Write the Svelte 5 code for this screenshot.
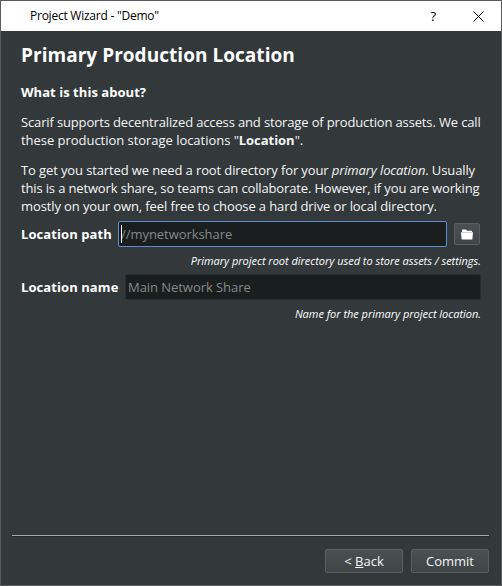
<script>
  let path = $state('');
  let name = $state('');
</script>

<div class="window">
  <header>
    <span class="caption">Project Wizard - "Demo"</span>
    <span class="help">?</span>
    <svg class="close" width="11" height="11" viewBox="0 0 11 11"><path d="M.5 .5l10 10M10.5 .5l-10 10" fill="none" stroke="#000" stroke-width="1" /></svg>
  </header>
  <main>
    <h1>Primary Production Location</h1>
    <h2>What is this about?</h2>
    <p>
      <span class="wide">Scarif supports decentralized access and storage of production assets. We call</span><br />
      <span class="loose">these production storage locations "<b>Location</b>".</span>
    </p>
    <p>
      <span class="mid">To get you started we need a root directory for your <i>primary location</i>. Usually</span><br />
      <span class="wide">this is a network share, so teams can collaborate. However, if you are working</span><br />
      <span class="mid">mostly on your own, feel free to choose a hard drive or local directory.</span>
    </p>
    <div class="row first">
      <label for="path">Location path</label>
      <div class="field focus"><input id="path" placeholder="//mynetworkshare" bind:value={path} /><span class="cursor"></span></div>
      <button class="browse" aria-label="Browse">
        <svg width="12" height="11" viewBox="0 0 12 11"><path d="M1 3V1.2Q1 .5 1.7 .5H5L6.2 1.7H10.5Q11 1.7 11 2.3V3z M0 3.3H12L11.4 10Q11.4 10.5 10.8 10.5H1.2Q.6 10.5 .6 10z" fill="#fff" /></svg>
      </button>
    </div>
    <div class="hint">Primary project root directory used to store assets / settings.</div>
    <div class="row second">
      <label for="name">Location name</label>
      <div class="field"><input id="name" placeholder="Main Network Share" bind:value={name} /></div>
    </div>
    <div class="hint">Name for the primary project location.</div>
  </main>
  <footer>
    <button>&lt;&nbsp;<u>B</u>ack</button>
    <button>Commit</button>
  </footer>
</div>

<style>
  .window {
    box-sizing: border-box;
    width: 502px;
    height: 586px;
    border: 1px solid #5b5b5d;
    background: #33383b;
    color: #f4f5f5;
    font: 13px/18px "Open Sans", "Noto Sans", sans-serif;
    display: flex;
    flex-direction: column;
    overflow: hidden;
  }
  header {
    height: 30px;
    flex: none;
    display: flex;
    align-items: center;
    background: #fff;
    color: #000;
    padding: 0 17px 0 29px;
    font-size: 12px;
  }
  .caption { flex: 1; white-space: nowrap; letter-spacing: -0.24px; }
  .help { margin-right: 37px; font-size: 13px; }
  .close { display: block; }
  main { flex: 1; padding: 0 20px; }
  h1 { margin: 11px 0 0; font-size: 19px; line-height: 26px; font-weight: 700; letter-spacing: 0.04px; white-space: nowrap; color: #fff; }
  h2 { margin: 15px 0 0; font-size: 13px; line-height: 18px; font-weight: 700; letter-spacing: 0.04px; color: #fff; }
  p { margin: 12px 0 0; white-space: nowrap; }
  .wide { letter-spacing: -0.145px; }
  .mid { letter-spacing: -0.115px; }
  .loose { letter-spacing: -0.035px; }
  .row { display: flex; align-items: center; height: 26px; }
  .first { margin-top: 6px; }
  .second { margin-top: 1px; }
  label { font-weight: 700; white-space: nowrap; color: #fff; flex: none; letter-spacing: 0.08px; }
  .first label { width: 97px; }
  .second label { width: 104px; }
  .field {
    box-sizing: border-box;
    flex: 1;
    height: 26px;
    position: relative;
    display: flex;
    border: 1px solid #282d2f;
    border-radius: 2px;
    background: #1a1e1f;
  }
  .focus { border-color: #5c8fd0; }
  input {
    flex: 1;
    min-width: 0;
    border: 0;
    outline: 0;
    padding: 0 2px;
    background: none;
    color: #f4f5f5;
    font: inherit;
    letter-spacing: -0.05px;
  }
  input::placeholder { color: #858989; opacity: 1; }
  .cursor { position: absolute; left: 2px; top: 3px; width: 1px; height: 18px; background: #fff; }
  button {
    box-sizing: border-box;
    border: 1px solid #5a6062;
    border-radius: 2px;
    background: linear-gradient(#4b5053, #404548);
    color: #f4f5f5;
    font: inherit;
    padding: 0;
  }
  .browse { width: 26px; height: 22px; margin: 0 1px 0 7px; display: flex; align-items: center; justify-content: center; flex: none; }
  .hint { height: 26px; line-height: 28px; text-align: right; font-size: 11px; font-style: italic; letter-spacing: -0.025px; white-space: nowrap; color: #fff; }
  footer {
    flex: none;
    height: 49px;
    margin: 0 12px 0 11px;
    border-top: 1px solid #a4aaab;
    box-shadow: inset 0 1px #24292b;
    display: flex;
    justify-content: flex-end;
    gap: 8px;
  }
  footer button { width: 78px; height: 24px; margin-top: 13px; }
</style>
